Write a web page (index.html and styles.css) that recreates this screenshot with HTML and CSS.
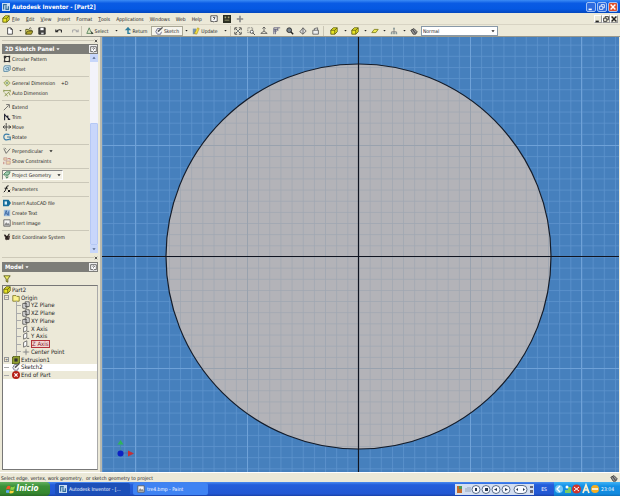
FILE: index.html
```html
<!DOCTYPE html>
<html lang="en">
<head>
<meta charset="utf-8">
<title>Autodesk Inventor - [Part2]</title>
<link rel="stylesheet" href="styles.css">
</head>
<body>
<svg class="defs" aria-hidden="true">
  <symbol id="cube" viewBox="0 0 10 10"><path d="M1 4l3-3h5v5L6 9H1z" fill="#e8e526" stroke="#55550a"/><path d="M1 4h5v5M6 4l3-3" fill="none" stroke="#55550a"/></symbol>
  <symbol id="page" viewBox="0 0 10 10"><path d="M2 1h4l2 2v6H2z" fill="#fff" stroke="#333"/><path d="M6 1v2h2" fill="none" stroke="#333"/></symbol>
  <symbol id="folder" viewBox="0 0 10 10"><path d="M1 9V3h3l1 1h3v1" fill="#f4ee70" stroke="#444411"/><path d="M1 9l2-4h7L8 9z" fill="#b4a82a" stroke="#444411"/><path d="M5 2q2-2 3 0" fill="none" stroke="#333"/></symbol>
  <symbol id="save" viewBox="0 0 10 10"><path d="M1 1h8v8H1z" fill="#444" stroke="#222"/><path d="M3 1h4v3H3z" fill="#fff"/><path d="M4 7h3v2H4z" fill="#ddd"/></symbol>
  <symbol id="undo" viewBox="0 0 10 10"><path d="M1 3v3h3M1 6q4-4 7-2v3" fill="none" stroke="currentColor" stroke-width="1.3"/></symbol>
  <symbol id="select" viewBox="0 0 10 10"><path d="M1 8l3-7 2 5 3 2z" fill="#dfe8c8" stroke="#4b7a50"/><path d="M6 5l3 3-2 1z" fill="#333"/></symbol>
  <symbol id="return" viewBox="0 0 10 10"><path d="M5 1v7h3" fill="none" stroke="#2c7d9c" stroke-width="1.800"/><path d="M5 0l4 4H1z" fill="#2c7d9c"/></symbol>
  <symbol id="sketch" viewBox="0 0 10 10"><path d="M7 2H3L1 6l2 3h4l1-3" fill="#fff" stroke="#557"/><path d="M3 7l1-3 5-4 1 1-5 5z" fill="#555"/></symbol>
  <symbol id="update" viewBox="0 0 10 10"><path d="M1 2h4v7H1z" fill="#7995ad"/><path d="M3 8l4-7 2 1-3 7z" fill="#f2dd3c" stroke="#99801a" stroke-width=".6"/></symbol>
  <symbol id="zoomall" viewBox="0 0 10 10"><path d="M1 4V1h3M6 1h3v3M9 6v3H6M4 9H1V6M2 2l2 2M8 2L6 4M2 8l2-2M8 8L6 6" fill="none" stroke="#333"/><path d="M4 4h2v2H4z" fill="#456"/></symbol>
  <symbol id="zoomwin" viewBox="0 0 10 10"><path d="M1 1h6v6H1z" fill="none" stroke="#555" stroke-dasharray="1 1"/><circle cx="6" cy="6" r="2" fill="#fff" stroke="#444"/><path d="M7 7l3 3" stroke="#333"/></symbol>
  <symbol id="zoom" viewBox="0 0 10 10"><path d="M5 0v5M3 2l2-2 2 2M5 5L1 8h8z" fill="none" stroke="#444" stroke-width=".9"/></symbol>
  <symbol id="pan" viewBox="0 0 10 10"><path d="M1 1h8M1 3h5M1 5h4M1 1v8M3 3v6M6 1v4" stroke="#557"/></symbol>
  <symbol id="lens" viewBox="0 0 10 10"><circle cx="4" cy="4" r="3" fill="#7c8790" stroke="#222"/><path d="M6 6l3 3" stroke="#222" stroke-width="1.8"/></symbol>
  <symbol id="orbit" viewBox="0 0 10 10"><path d="M1 6l4-5 4 4-4 4z" fill="#ddd" stroke="#555"/><path d="M5 1v8" stroke="#555"/></symbol>
  <symbol id="look" viewBox="0 0 10 10"><path d="M1 4h7v5H1zM3 4V2l4-1v3" fill="#eee" stroke="#555"/></symbol>
  <symbol id="plane" viewBox="0 0 10 10"><path d="M1 7l3-4h5L6 7z" fill="#eeeb55" stroke="#777713"/></symbol>
  <symbol id="tree" viewBox="0 0 10 10"><path d="M5 1v4M2 8V6h6v2M5 5v3" fill="none" stroke="#777"/><path d="M4 1h2v2H4zM1 7h2v2H1zM4 7h2v2H4zM7 7h2v2H7z" fill="#899"/></symbol>
  <symbol id="brush" viewBox="0 0 10 10"><path d="M1 4l4-2 4 4-2 3H4z" fill="#999" stroke="#333"/><path d="M3 3l4 5" stroke="#222"/></symbol>
  <symbol id="help" viewBox="0 0 10 10"><path d="M1 1h8v7H6L5 9 4 8H1z" fill="#fff" stroke="#333"/><path d="M3.500 3.500q1.500-1.500 3 0L5 5v1" fill="none" stroke="#333"/></symbol>
  <symbol id="chart" viewBox="0 0 10 10"><path d="M0 0h10v10H0z" fill="#2b2e22"/><path d="M2 2h2v2H2zM6 2h2v2H6zM2 6h6v1H2z" fill="#a8a878"/></symbol>
  <symbol id="plus" viewBox="0 0 10 10"><path d="M5 1v8M1 5h8" stroke="#888" stroke-width="2"/></symbol>
  <symbol id="pattern" viewBox="0 0 10 10"><path d="M2 2h6v6H2z" fill="none" stroke="#333" stroke-width="1.3"/><path d="M1 1h3v3H1zM7 1h2v2H7zM1 7h2v2H1zM7 7h2v2H7z" fill="#333"/></symbol>
  <symbol id="offset" viewBox="0 0 10 10"><path d="M2 1h7v5L6 8H1V3z" fill="#d6eaf2" stroke="#467b98"/><path d="M3 4l4-1v3H4z" fill="none" stroke="#467b98"/></symbol>
  <symbol id="gdim" viewBox="0 0 10 10"><path d="M1 5l4-4 4 4-4 4z" fill="#f0efb0" stroke="#8a9a44"/><path d="M3 5h4M5 3v4" stroke="#688"/></symbol>
  <symbol id="adim" viewBox="0 0 10 10"><path d="M1 2h8M1 1v3M9 1v3M2 9l5-5 2 4M2 5l4 4" fill="none" stroke="#7c8b3b"/></symbol>
  <symbol id="extend" viewBox="0 0 10 10"><path d="M1 9l6-6M4 2h4v4" fill="none" stroke="#555"/></symbol>
  <symbol id="trim" viewBox="0 0 10 10"><path d="M2 1v8M2 2l6 6M6 3v3M6 8h3" fill="none" stroke="#223" stroke-width="1.400"/></symbol>
  <symbol id="move" viewBox="0 0 10 10"><path d="M0 5h10M4 0v10M7 3l3 2-3 2M2 3L0 5l2 2" fill="none" stroke="#333"/></symbol>
  <symbol id="rotate" viewBox="0 0 10 10"><path d="M8 2Q1 0 1 5t7 3M5 5h4v4" fill="none" stroke="#3a7ca8" stroke-width="1.500"/></symbol>
  <symbol id="perp" viewBox="0 0 10 10"><path d="M1 2l3 6 5-6M2 1l2 2" fill="none" stroke="#555"/></symbol>
  <symbol id="constr" viewBox="0 0 10 10"><path d="M1 1h4v3H1zM4 5h5v4H4z" fill="#f0d8a8" stroke="#c09a9a"/><path d="M6 2h3v2M1 6v3" fill="none" stroke="#b66"/></symbol>
  <symbol id="project" viewBox="0 0 10 10"><path d="M1 4l3-3h5L7 5H1z" fill="#a5cfb4" stroke="#35744f"/><path d="M5 5v4M3 7l2 2 2-2" fill="none" stroke="#35744f"/></symbol>
  <symbol id="acad" viewBox="0 0 10 10"><path d="M0 1h7l3 4-3 4H0z" fill="#176d99"/><path d="M2 3h3v4H2z" fill="#d8f0fa"/></symbol>
  <symbol id="text" viewBox="0 0 10 10"><path d="M1 1h8v8H1z" fill="#9ebddd"/><path d="M2 8l2-6 2 6M3 6h2M7 3v5" fill="none" stroke="#315e9a"/></symbol>
  <symbol id="image" viewBox="0 0 10 10"><path d="M1 1h8v8H1z" fill="#f4f4f4" stroke="#555"/><path d="M1 8l3-4 2 2 1-1 2 3z" fill="#888"/></symbol>
  <symbol id="coord" viewBox="0 0 10 10"><path d="M1 2l4 2 4-1-1 5-4 1z" fill="#544"/><path d="M2 2l5 6M8 1L3 8" stroke="#221c18" stroke-width="1.300"/></symbol>
  <symbol id="wplane" viewBox="0 0 10 10"><path d="M1 3h5v6H1zM4 1h5v6H4z" fill="#eee" stroke="#444"/></symbol>
  <symbol id="waxis" viewBox="0 0 10 10"><path d="M2 3l4-2v6L2 9z" fill="#fff" stroke="#555"/><path d="M6 8h3" stroke="#555"/></symbol>
  <symbol id="point" viewBox="0 0 10 10"><path d="M5 1v8M1 5h8" stroke="#888"/><path d="M4 4h2v2H4z" fill="#eee" stroke="#888"/></symbol>
  <symbol id="extr" viewBox="0 0 10 10"><path d="M0 2l3-2h7v8l-3 2H0z" fill="#92a032" stroke="#343a10"/><path d="M3 3h4v4H3z" fill="#333"/></symbol>
  <symbol id="end" viewBox="0 0 10 10"><circle cx="5" cy="5" r="5" fill="#b51f16"/><path d="M3 3l4 4M7 3L3 7" stroke="#fff" stroke-width="1.500"/></symbol>
  <symbol id="ofolder" viewBox="0 0 10 10"><path d="M1 9V2h4l1 1h3v6z" fill="#fbf38e" stroke="#77701c"/></symbol>
  <symbol id="funnel" viewBox="0 0 10 10"><path d="M1 1h8L6 5v4L4 8V5z" fill="#f0ee68" stroke="#4c4c10"/></symbol>
  <symbol id="app" viewBox="0 0 10 10"><path d="M0 0h10v10H0z" fill="#c7dcf2"/><path d="M2 8V2h4M5 3v5h3V4" fill="none" stroke="#35709c" stroke-width="1.500"/></symbol>
  <symbol id="flag" viewBox="0 0 10 10"><path d="M1 2q2-2 4-.5L4 5Q2 4 0 5z" fill="#f0572b"/><path d="M5.500 2Q8 3 10 1.500L9 5Q7 6 4.500 5z" fill="#8fd244"/><path d="M0 6q2-1 4 0L3 9Q1 8-1 9z" fill="#5daaf2"/><path d="M4.500 6Q7 7 9 6L8 9Q5 10 3.500 9z" fill="#fad33c"/></symbol>
  <symbol id="min" viewBox="0 0 10 10"><path d="M2 8h4" stroke="currentColor" stroke-width="2"/></symbol>
  <symbol id="rest" viewBox="0 0 10 10"><path d="M4 4V2h4v4H6M2 4h4v4H2z" fill="none" stroke="currentColor"/></symbol>
  <symbol id="close" viewBox="0 0 10 10"><path d="M2 2l6 6M8 2L2 8" stroke="currentColor" stroke-width="1.800"/></symbol>
  <symbol id="down" viewBox="0 0 10 10"><path d="M1 3h8L5 8z" fill="currentColor"/></symbol>
  <symbol id="fx" viewBox="0 0 10 10"><path d="M7 1Q5 0 4 4T1 9M2 4h4M6 6l3 3M9 6L6 9" fill="none" stroke="#111" stroke-width="1.200"/></symbol>
</svg>
<div class="app">
  <header class="title">
    <svg class="ic"><use href="#app"/></svg><h1>Autodesk Inventor - [Part2]</h1>
    <div class="wins">
      <button class="wb" aria-label="Minimize"><svg><use href="#min"/></svg></button>
      <button class="wb" aria-label="Restore"><svg><use href="#rest"/></svg></button>
      <button class="wb red" aria-label="Close"><svg><use href="#close"/></svg></button>
    </div>
  </header>
  <nav class="menu">
    <svg class="ic"><use href="#cube"/></svg>
    <button><u>F</u>ile</button><button><u>E</u>dit</button><button><u>V</u>iew</button><button><u>I</u>nsert</button><button>F<u>o</u>rmat</button><button><u>T</u>ools</button><button><u>A</u>pplications</button><button><u>W</u>indows</button><button>We<u>b</u></button><button><u>H</u>elp</button>
    <div class="extras">
      <button aria-label="Help topics"><svg class="ic"><use href="#help"/></svg></button>
      <button aria-label="Parts chart"><svg class="ic"><use href="#chart"/></svg></button>
      <button aria-label="Add"><svg class="ic"><use href="#plus"/></svg></button>
    </div>
    <div class="wins">
      <button class="db" aria-label="Minimize document"><svg><use href="#min"/></svg></button>
      <button class="db" aria-label="Restore document"><svg><use href="#rest"/></svg></button>
      <button class="db" aria-label="Close document"><svg><use href="#close"/></svg></button>
    </div>
  </nav>
  <div class="tools">
    <button aria-label="New"><svg class="ic"><use href="#page"/></svg></button>
    <button aria-label="New options"><svg class="dn"><use href="#down"/></svg></button>
    <button aria-label="Open"><svg class="ic"><use href="#folder"/></svg></button>
    <button aria-label="Save"><svg class="ic"><use href="#save"/></svg></button>
    <button aria-label="Undo"><svg class="ic"><use href="#undo"/></svg></button>
    <button class="off" aria-label="Redo"><svg class="ic flip"><use href="#undo"/></svg></button>
    <button class="lab bar"><svg class="ic"><use href="#select"/></svg>Select</button>
    <button aria-label="Select options"><svg class="dn"><use href="#down"/></svg></button>
    <button class="lab"><svg class="ic"><use href="#return"/></svg>Return</button>
    <button class="lab on"><svg class="ic"><use href="#sketch"/></svg>Sketch</button>
    <button aria-label="Sketch options"><svg class="dn"><use href="#down"/></svg></button>
    <button class="lab"><svg class="ic"><use href="#update"/></svg>Update</button>
    <button aria-label="Update options"><svg class="dn"><use href="#down"/></svg></button>
    <button class="bar" aria-label="Zoom all"><svg class="ic"><use href="#zoomall"/></svg></button>
    <button aria-label="Zoom window"><svg class="ic"><use href="#zoomwin"/></svg></button>
    <button aria-label="Zoom"><svg class="ic"><use href="#zoom"/></svg></button>
    <button aria-label="Pan"><svg class="ic"><use href="#pan"/></svg></button>
    <button aria-label="Zoom selected"><svg class="ic"><use href="#lens"/></svg></button>
    <button aria-label="Rotate view"><svg class="ic"><use href="#orbit"/></svg></button>
    <button aria-label="Look at"><svg class="ic"><use href="#look"/></svg></button>
    <button class="bar" aria-label="Shaded display"><svg class="ic"><use href="#cube"/></svg></button>
    <button aria-label="Display options"><svg class="dn"><use href="#down"/></svg></button>
    <button aria-label="Camera"><svg class="ic"><use href="#cube"/></svg></button>
    <button aria-label="Camera options"><svg class="dn"><use href="#down"/></svg></button>
    <button aria-label="Shadow"><svg class="ic"><use href="#plane"/></svg></button>
    <button aria-label="Shadow options"><svg class="dn"><use href="#down"/></svg></button>
    <button class="off" aria-label="Component opacity"><svg class="ic"><use href="#tree"/></svg></button>
    <button aria-label="Opacity options"><svg class="dn"><use href="#down"/></svg></button>
    <button aria-label="Style"><svg class="ic"><use href="#brush"/></svg></button>
    <div class="combo"><select aria-label="Line style"><option>Normal</option></select><svg class="dn"><use href="#down"/></svg></div>
  </div>
  <main class="work">
    <aside class="side">
      <div class="grip"><button aria-label="Close sketch panel"><svg class="dn"><use href="#close"/></svg></button></div>
      <div class="head"><h2>2D Sketch Panel</h2><svg class="dn"><use href="#down"/></svg><button aria-label="Panel help"><svg><use href="#help"/></svg></button></div>
      <section class="panel">
        <div class="cmds">
          <div class="grp"><button><svg class="ic"><use href="#pattern"/></svg>Circular Pattern</button><button><svg class="ic"><use href="#offset"/></svg>Offset</button></div>
          <div class="grp"><button><svg class="ic"><use href="#gdim"/></svg>General Dimension <span class="key">+D</span></button><button><svg class="ic"><use href="#adim"/></svg>Auto Dimension</button></div>
          <div class="grp"><button><svg class="ic"><use href="#extend"/></svg>Extend</button><button><svg class="ic"><use href="#trim"/></svg>Trim</button><button><svg class="ic"><use href="#move"/></svg>Move</button><button><svg class="ic"><use href="#rotate"/></svg>Rotate</button></div>
          <div class="grp"><button><svg class="ic"><use href="#perp"/></svg>Perpendicular<svg class="dn gap"><use href="#down"/></svg></button><button><svg class="ic"><use href="#constr"/></svg>Show Constraints</button></div>
          <div class="grp"><button class="sunk"><svg class="ic"><use href="#project"/></svg>Project Geometry<svg class="dn gap"><use href="#down"/></svg></button></div>
          <div class="grp"><button><svg class="ic"><use href="#fx"/></svg>Parameters</button></div>
          <div class="grp"><button><svg class="ic"><use href="#acad"/></svg>Insert AutoCAD file</button><button><svg class="ic"><use href="#text"/></svg>Create Text</button><button><svg class="ic"><use href="#image"/></svg>Insert Image</button></div>
          <div class="grp"><button><svg class="ic"><use href="#coord"/></svg>Edit Coordinate System</button></div>
        </div>
        <div class="scroll"><button aria-label="Scroll up"><svg class="dn up"><use href="#down"/></svg></button><div class="track"></div><div class="thumb"></div><button aria-label="Scroll down"><svg class="dn"><use href="#down"/></svg></button></div>
      </section>
      <div class="grip second"><button aria-label="Close model panel"><svg class="dn"><use href="#close"/></svg></button></div>
      <div class="head"><h2>Model</h2><svg class="dn"><use href="#down"/></svg><button aria-label="Model help"><svg><use href="#help"/></svg></button></div>
      <div class="filter"><button aria-label="Filter"><svg class="ic"><use href="#funnel"/></svg></button></div>
      <div class="model">
        <ul class="nodes">
          <li><svg class="ic"><use href="#cube"/></svg>Part2</li>
          <li class="l1"><i class="box">−</i><svg class="ic"><use href="#ofolder"/></svg>Origin</li>
          <li class="l2"><svg class="ic"><use href="#wplane"/></svg>YZ Plane</li>
          <li class="l2"><svg class="ic"><use href="#wplane"/></svg>XZ Plane</li>
          <li class="l2"><svg class="ic"><use href="#wplane"/></svg>XY Plane</li>
          <li class="l2"><svg class="ic"><use href="#waxis"/></svg>X Axis</li>
          <li class="l2"><svg class="ic"><use href="#waxis"/></svg>Y Axis</li>
          <li class="l2"><svg class="ic"><use href="#waxis"/></svg><span class="hot">Z Axis</span></li>
          <li class="l2"><svg class="ic"><use href="#point"/></svg>Center Point</li>
          <li class="l1"><i class="box">+</i><svg class="ic"><use href="#extr"/></svg>Extrusion1</li>
          <li class="l1 act"><i class="stub"></i><svg class="ic"><use href="#sketch"/></svg>Sketch2</li>
          <li class="l1"><i class="stub"></i><svg class="ic"><use href="#end"/></svg>End of Part</li>
        </ul>
      </div>
    </aside>
    <section class="canvas">
      <svg viewBox="0 0 517 435" preserveAspectRatio="xMidYMid slice" role="img" aria-label="Sketch with a circle centred on the origin">
        <defs>
          <pattern id="minor" width="11.150" height="11.150" patternUnits="userSpaceOnUse" x="256.500" y="219.500"><path d="M0 .5h11.150M.5 0v11.150" stroke="#5c93cd" stroke-width=".8"/></pattern>
          <pattern id="minorIn" width="11.150" height="11.150" patternUnits="userSpaceOnUse" x="256.500" y="219.500"><path d="M0 .5h11.150M.5 0v11.150" stroke="#a0a8b2" stroke-width=".8"/></pattern>
        </defs>
        <path d="M0 0h517v435H0z" fill="#4680bd"/>
        <path d="M0 0h517v435H0z" fill="url(#minor)"/>
        <path d="M33.500 0v435M145.500 0v435M368.500 0v435M479.500 0v435M0 108.500h517M0 331.500h517" stroke="#6fa2d8"/>
        <circle cx="256.500" cy="219.500" r="192.500" fill="#b3b3b8"/>
        <circle cx="256.500" cy="219.500" r="192" fill="url(#minorIn)"/>
        <path d="M145.500 63v313M368.500 63v313M100 108.500h313M100 331.500h313" stroke="#99a2ae"/>
        <circle cx="256.500" cy="219.500" r="192.500" fill="none" stroke="#141c2a" stroke-width="1.200"/>
        <path d="M0 219.500h517M256.500 0v435" stroke="#101420" stroke-width="1.200"/>
        <path d="M18.500 416V406" stroke="#3f8f9c" stroke-width=".7"/><path d="M18 416h12" stroke="#5d5a9a" stroke-width=".7"/>
        <path d="M15.500 407.500l3-4.500 3 4.500z" fill="#2fb35a"/>
        <circle cx="18.500" cy="416.500" r="3" fill="#0c20c4"/><path d="M26 413.500l6 3-6 3z" fill="#c33139"/>
      </svg>
    </section>
  </main>
  <div class="status">Select edge, vertex, work geometry,&nbsp; or sketch geometry to project<svg class="ic"><use href="#brush"/></svg></div>
  <footer class="task">
    <button class="start"><svg><use href="#flag"/></svg>Inicio</button>
    <button class="win cur"><svg class="ic"><use href="#app"/></svg>Autodesk Inventor - [...</button>
    <button class="win"><svg class="ic"><use href="#image"/></svg>tre4.bmp - Paint</button>
    <div class="media">
      <svg viewBox="0 0 79 11" role="img" aria-label="Media player controls"><path d="M2 2h5v7H2z" fill="#c66a2b"/><path d="M4 2h3v3H4z" fill="#4c9a53"/><path d="M11 8V4M13 8V3M15 8V3" stroke="#94a3b8"/><g fill="#f8faff" stroke="#5d6f8c"><circle cx="21" cy="5.500" r="4"/><circle cx="31" cy="5.500" r="4"/><circle cx="41" cy="5.500" r="4"/><circle cx="51" cy="5.500" r="4"/><rect x="59" y="1.500" width="13" height="8" rx="4"/></g><path d="M20 4h2v3h-2zM30 4h3v3h-3zM42 4v3l-3-1.500zM50 4v3l3-1.500zM63 4v3l-2-1.500zM68 4v3l2-1.500z" fill="#26364c"/><path d="M75 2h3v2h-3zM75 6h3v3h-3z" fill="#667"/></svg>
    </div>
    <span class="lang">ES</span>
    <div class="tray">
      <svg viewBox="0 0 46 12" role="img" aria-label="Notification icons"><circle cx="5" cy="6" r="4" fill="#74c7f5"/><path d="M6 3L3 6l3 3" fill="none" stroke="#fff" stroke-width="1.300"/><path d="M11 10V7h3V4h3v6z" fill="#79cb62"/><circle cx="13" cy="4" r="1.500" fill="#fff"/><circle cx="22.500" cy="6" r="4.500" fill="#cf342c"/><path d="M20 4l5 4M25 4l-5 4" stroke="#fff"/><path d="M29 10l3-8 3 8M30 7h4" fill="none" stroke="#fff1d0" stroke-width="1.700"/><circle cx="41" cy="6" r="4" fill="#f5ad22"/><path d="M38 6h6" stroke="#fff" stroke-width="1.500"/></svg>
      <time>23:04</time>
    </div>
  </footer>
</div>
</body>
</html>
```

FILE: styles.css
```css
* { box-sizing: border-box; }
body { margin: 0; font: 5px/8px "DejaVu Sans Condensed", "DejaVu Sans", sans-serif; color: #222; }
button { display: flex; align-items: center; justify-content: center; margin: 0; padding: 0; border: 0; background: none; font: inherit; color: inherit; white-space: nowrap; }
h1, h2 { margin: 0; font: inherit; font-weight: bold; }
svg { display: block; flex: none; }
.defs { position: absolute; width: 0; height: 0; }
.ic { width: 8px; height: 8px; }
.dn { width: 4px; height: 4px; }
.up { transform: rotate(180deg); }
.flip { transform: scaleX(-1); }
.off { color: #aaa; }
.app { display: flex; flex-direction: column; height: 100vh; background: #ece9d8; }

.title { display: flex; align-items: center; gap: 2px; height: 13px; padding: 0 2px; background: linear-gradient(#3c8cf5, #0a5be4 25%, #0558e2 70%, #0347bd); color: #fff; }
.title h1 { font-size: 6px; }
.wins { display: flex; gap: 1px; margin-left: auto; }
.wb { width: 10px; height: 10px; border: 1px solid #9fc1f5; border-radius: 2px; background: #2f6cdf; }
.wb svg, .db svg { width: 8px; height: 8px; }
.wb.red { background: #de502c; }

.menu { display: flex; align-items: center; gap: 6px; height: 12px; padding: 0 2px; border-bottom: 1px solid #d8d4c4; }
.menu > .ic { margin-right: -4px; }
.menu u { text-decoration-thickness: 1px; text-underline-offset: 0; text-decoration-color: #999; }
.extras { display: flex; gap: 5px; margin-left: 2px; }
.menu .wins { gap: 0; }
.db { width: 8px; height: 8px; border: 1px solid; border-color: #fff #999 #999 #fff; }

.tools { display: grid; grid-template-columns: 14px 6px 12px 14px 20px 12px 31px 8px 31px 32px 6px 32px 9px 14px 13px 13px 13px 13px 13px 14px 20px 4px 16px 4px 15px 4px 15px 6px 14px 77px; align-items: center; height: 12px; padding-left: 3px; border-bottom: 1px solid #99998e; }
.tools button { height: 10px; }
.tools button .dn { width: 3px; height: 3px; }
.lab { gap: 1px; }
.bar { border-left: 1px solid #c9c5b4; }
.tools .on { border: 1px solid #aaa896; background: #f6f4ec; }
.combo { display: flex; align-items: center; height: 10px; border: 1px solid #8899a8; background: #fff; padding-right: 2px; }
.combo select { flex: 1; min-width: 0; height: 8px; margin: 0; padding: 0 1px; border: 0; appearance: none; background: none; font: inherit; color: inherit; }

.work { display: flex; flex: 1; min-height: 0; }
.side { display: flex; flex-direction: column; width: 102px; padding: 0 2px; border-right: 2px solid #b9b9ae; }
.grip { display: flex; justify-content: flex-end; align-items: center; height: 7px; }
.grip::before { content: ""; flex: 1; height: 1px; background: #cdc9b8; }
.head { display: flex; align-items: center; gap: 2px; height: 10px; padding: 0 1px 0 3px; background: #7d7d78; color: #fff; }
.head h2 { font-size: 6px; }
.head button { width: 8px; height: 8px; margin-left: auto; background: #eee; }
.head button svg { width: 7px; height: 7px; }
.panel { display: flex; justify-content: space-between; height: 199px; }
.cmds { display: flex; flex-direction: column; justify-content: space-between; width: 87px; height: 188px; }
.grp { position: relative; }
.grp + .grp::before { content: ""; position: absolute; top: -2px; left: 0; right: 0; height: 1px; background: #cbc8b9; }
.grp button { justify-content: flex-start; gap: 1px; height: 10px; padding-left: 1px; }
.key { padding-left: 5px; }
.gap { margin-left: 5px; }
.grp .sunk { padding: 0 1px 0 0; border: 1px solid; border-color: #888 #fff #fff #888; background: #f4f2e9; }
.scroll { display: flex; flex-direction: column; width: 8px; background: #f3f3fa; }
.scroll button { width: 8px; height: 8px; background: #c7d6fa; color: #4d6185; }
.track { flex: 62; }
.thumb { flex: 121; border: 1px solid #b5c8f5; border-radius: 1px; background: #c8d6fb; }
.second { height: 9px; }
.filter { display: flex; align-items: center; height: 13px; padding-left: 1px; }
.model { flex: 1; margin-bottom: 2px; border: 1px solid #777; border-right-color: #aaa; background: #fff; }
.nodes { display: grid; grid-auto-rows: 1fr; height: 93px; margin: 0; padding: 0; list-style: none; background: #ece9d8; font-size: 6px; }
.nodes li { display: flex; align-items: center; gap: 1px; min-height: 0; white-space: nowrap; }
.l1 { padding-left: 1px; }
.l1 .ic { margin-left: 2px; }
.l2 { padding-left: 13px; }
.l2::before { content: ""; width: 4px; height: 8px; border-left: 1px solid #aaa; background: linear-gradient(#aaa, #aaa) center / 100% 1px no-repeat; }
.nodes .act { background: #fff; }
.box { width: 5px; height: 5px; border: 1px solid #999; color: #555; font: 4px/3px "DejaVu Sans", sans-serif; text-align: center; }
.stub { width: 5px; height: 1px; background: #aaa; }
.hot { border: 1px solid #b4333a; line-height: 6px; background: #f2d6d2; color: #8b2530; }

.canvas { flex: 1; min-width: 0; margin-right: 1px; background: #4680bd; overflow: hidden; }
.canvas svg { width: 100%; height: 100%; }

.status { display: flex; align-items: center; justify-content: space-between; height: 10px; padding: 0 2px 0 1px; border-top: 1px solid #fff; white-space: nowrap; }
.task { display: flex; align-items: center; gap: 3px; height: 14px; background: linear-gradient(#4a8bf0, #245edb 20%, #2257d2 85%, #1941a5); color: #fff; }
.start { gap: 2px; width: 50px; height: 14px; padding-right: 6px; margin-right: 2px; border-radius: 0 4px 4px 0; background: linear-gradient(#63b05e, #3c9139 30%, #35872f 80%, #2a6b28); font: italic bold 8px/12px "DejaVu Sans Condensed", sans-serif; }
.start svg { width: 9px; height: 9px; }
.win { justify-content: flex-start; gap: 2px; width: 75px; height: 12px; padding-left: 4px; border-radius: 2px; background: #3f83f3; }
.win.cur { background: #1c4fb8; }
.media { width: 79px; margin-left: auto; background: #d3def0; }
.media svg { width: 79px; height: 11px; }
.lang { width: 14px; text-align: center; }
.tray { display: flex; align-items: center; gap: 1px; height: 14px; padding-right: 6px; background: linear-gradient(#3fb2f5, #1290e6 30%, #118ade 85%, #0f70bb); }
.tray svg { width: 46px; height: 12px; }
.tray time { white-space: nowrap; }
```
